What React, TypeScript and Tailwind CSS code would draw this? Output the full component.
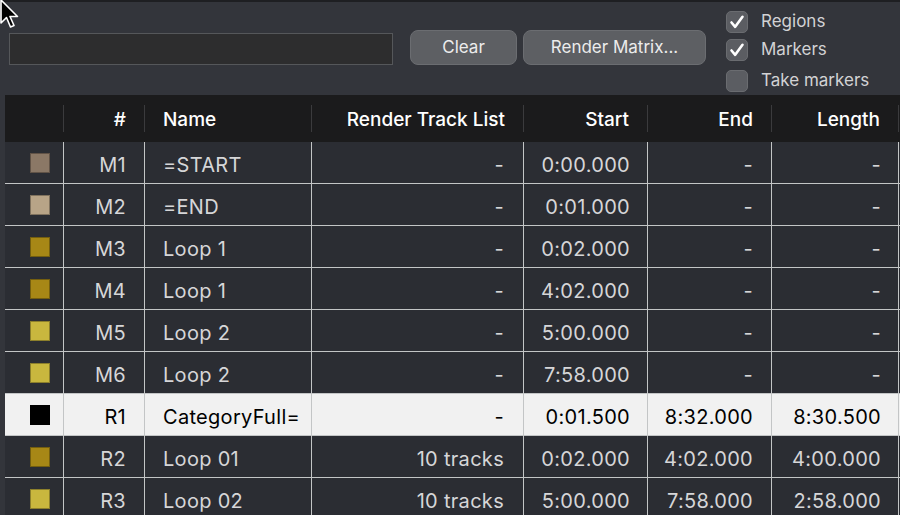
import React from 'react'

type Row = {
    color: string
    id: string
    name: string
    tracks: string
    start: string
    end: string
    length: string
    selected?: boolean
}

const rows: Row[] = [
    { color: '#8b7866', id: 'M1', name: '=START', tracks: '-', start: '0:00.000', end: '-', length: '-' },
    { color: '#b8a487', id: 'M2', name: '=END', tracks: '-', start: '0:01.000', end: '-', length: '-' },
    { color: '#a78716', id: 'M3', name: 'Loop 1', tracks: '-', start: '0:02.000', end: '-', length: '-' },
    { color: '#a78716', id: 'M4', name: 'Loop 1', tracks: '-', start: '4:02.000', end: '-', length: '-' },
    { color: '#c9b73e', id: 'M5', name: 'Loop 2', tracks: '-', start: '5:00.000', end: '-', length: '-' },
    { color: '#c9b73e', id: 'M6', name: 'Loop 2', tracks: '-', start: '7:58.000', end: '-', length: '-' },
    { color: '#000000', id: 'R1', name: 'CategoryFull=', tracks: '-', start: '0:01.500', end: '8:32.000', length: '8:30.500', selected: true },
    { color: '#a78716', id: 'R2', name: 'Loop 01', tracks: '10 tracks', start: '0:02.000', end: '4:02.000', length: '4:00.000' },
    { color: '#c9b73e', id: 'R3', name: 'Loop 02', tracks: '10 tracks', start: '5:00.000', end: '7:58.000', length: '2:58.000' },
]

const cols = 'grid grid-cols-[59px_81px_167px_212px_124px_124px_127px]'

function Check({ checked, label }: { checked: boolean; label: string }) {
    return (
        <div className="flex items-center gap-[13px] h-[28px]">
            <div className="w-[22px] h-[22px] rounded-[5px] bg-[#5b5d62] border border-[#6a6c70] flex items-center justify-center">
                {checked && (
                    <svg width="16" height="16" viewBox="0 0 16 16">
                        <path d="M2.5 8.5 L6.2 12.8 L13.5 2.8" fill="none" stroke="#ffffff" strokeWidth="2.6" strokeLinecap="round" strokeLinejoin="round" />
                    </svg>
                )}
            </div>
            <span className="text-[17px] text-[#d2d2d4]">{label}</span>
        </div>
    )
}

function HeadCell({ children, align = 'right' }: { children?: React.ReactNode; align?: 'left' | 'right' }) {
    return (
        <div className="flex items-center">
            <div className={align === 'left' ? 'flex-1 pl-[18px] pt-[4px] text-left' : 'flex-1 pr-[18px] pt-[4px] text-right'}>{children}</div>
            <div className="w-px h-[27px] bg-[#3b3b3d]" />
        </div>
    )
}

export default function App() {
    return (
        <div
            className="relative w-[900px] h-[515px] overflow-hidden bg-[#33353b] flex flex-col"
            style={{ fontFamily: 'Inter, "Noto Sans", sans-serif' }}
        >
            {/* top strip */}
            <div className="h-[2px] shrink-0 bg-[#1e1f22]" />

            {/* Toolbar */}
            <div className="h-[93px] shrink-0 flex items-start pl-[9px]">
                <div className="mt-[31px] w-[384px] h-[32px] bg-[#2d2d2e] border border-[#55575a]" />
                <button className="mt-[28px] ml-[17px] w-[107px] h-[35px] rounded-[8px] bg-[#5d5f63] border border-[#6b6d71] text-[17px] text-[#ececec]">
                    Clear
                </button>
                <button className="mt-[28px] ml-[6px] w-[183px] h-[35px] rounded-[8px] bg-[#5d5f63] border border-[#6b6d71] text-[17px] text-[#ececec]">
                    Render Matrix...
                </button>
                <div className="ml-[20px] mt-[6px] flex flex-col">
                    <Check checked label="Regions" />
                    <Check checked label="Markers" />
                    <div className="mt-[3px]">
                        <Check checked={false} label="Take markers" />
                    </div>
                </div>
            </div>

            {/* Table */}
            <div className="flex-1 min-h-0 pl-[5px] bg-[#33353b]">
                <div className={`${cols} h-[47px] bg-[#1b1b1c] text-white text-[19px] font-medium`}>
                    <HeadCell />
                    <HeadCell>#</HeadCell>
                    <HeadCell align="left">Name</HeadCell>
                    <HeadCell>Render Track List</HeadCell>
                    <HeadCell>Start</HeadCell>
                    <HeadCell>End</HeadCell>
                    <HeadCell>Length</HeadCell>
                </div>
                {rows.map((r) => (
                    <div
                        key={r.id}
                        className={`${cols} h-[42px] border-b border-[#c3c5c6] text-[20px] tracking-[0.3px] ${
                            r.selected ? 'bg-[#f1f1f1] text-black' : 'bg-[#2b2d33] text-[#d6d6d8]'
                        }`}
                    >
                        <div className="flex items-center justify-end pr-[13px] border-r border-[#c3c5c6]">
                            <div className="w-[20px] h-[20px] border border-black/30" style={{ backgroundColor: r.color }} />
                        </div>
                        <div className="flex items-center justify-end pt-[4px] pr-[18px] border-r border-[#c3c5c6]">{r.id}</div>
                        <div className="flex items-center pt-[4px] pl-[18px] border-r border-[#c3c5c6] whitespace-nowrap overflow-hidden">{r.name}</div>
                        <div className="flex items-center justify-end pt-[4px] pr-[19px] border-r border-[#c3c5c6]">{r.tracks}</div>
                        <div className="flex items-center justify-end pt-[4px] pr-[17px] border-r border-[#c3c5c6]">{r.start}</div>
                        <div className="flex items-center justify-end pt-[4px] pr-[18px] border-r border-[#c3c5c6]">{r.end}</div>
                        <div className="flex items-center justify-end pt-[4px] pr-[17px] border-r border-[#c3c5c6]">{r.length}</div>
                    </div>
                ))}
            </div>

            {/* mouse cursor */}
            <svg className="absolute left-0 top-0" width="24" height="32" viewBox="0 0 24 32">
                <path d="M1 0 L1 23 L6.5 17.5 L10.5 27 L14 25.5 L10 16.5 L17.5 16.5 Z" fill="#000" stroke="#fff" strokeWidth="1.6" strokeLinejoin="round" />
            </svg>
        </div>
    )
}
